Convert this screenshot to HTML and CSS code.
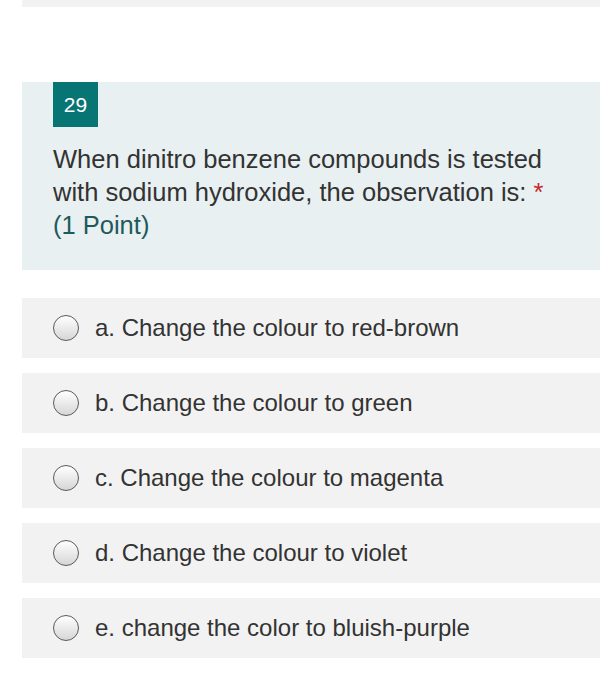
FILE: index.html
```html
<!DOCTYPE html>
<html>
<head>
<meta charset="utf-8">
<link rel="stylesheet" href="styles.css">
</head>
<body>
<div class="page">
  <div class="prev-card"></div>
  <div class="question">
    <div class="qnum">29</div>
    <div class="qtext">When dinitro benzene compounds is tested with sodium hydroxide, the observation is: <span class="req">*</span><br><span class="points">(1 Point)</span></div>
  </div>
  <div class="options">
    <label class="option"><span class="radio"></span><span class="otext">a. Change the colour to red-brown</span></label>
    <label class="option"><span class="radio"></span><span class="otext">b. Change the colour to green</span></label>
    <label class="option"><span class="radio"></span><span class="otext">c. Change the colour to magenta</span></label>
    <label class="option"><span class="radio"></span><span class="otext">d. Change the colour to violet</span></label>
    <label class="option"><span class="radio"></span><span class="otext">e. change the color to bluish-purple</span></label>
  </div>
</div>
</body>
</html>
```
FILE: styles.css
```css
html, body {
  margin: 0;
  padding: 0;
  background: #ffffff;
}
body {
  font-family: "Liberation Sans", Arial, sans-serif;
  color: #333333;
}
.page {
  padding: 0 10px 0 22px;
  width: 578px;
}
.prev-card {
  height: 7px;
  background: #f2f2f2;
}
.question {
  margin-top: 75px;
  background: #e8f0f2;
  padding: 0 20px 28px 31px;
}
.qnum {
  width: 45px;
  height: 45px;
  background: #087575;
  color: #ffffff;
  font-size: 21px;
  display: flex;
  align-items: center;
  justify-content: center;
}
.qtext {
  margin-top: 16px;
  font-size: 25.5px;
  line-height: 33px;
  color: #333333;
}
.req {
  color: #c8282d;
}
.points {
  color: #1e5a5a;
}
.options {
  margin-top: 28px;
  display: flex;
  flex-direction: column;
  gap: 15px;
}
.option {
  height: 60px;
  background: #f2f2f2;
  display: flex;
  align-items: center;
  padding-left: 31px;
}
.radio {
  width: 24px;
  height: 24px;
  border: 1.5px solid #5a5a5a;
  border-radius: 50%;
  background: linear-gradient(#ffffff, #d6d6d6);
  flex: none;
}
.otext {
  margin-left: 16px;
  font-size: 24px;
  color: #333333;
}
```
